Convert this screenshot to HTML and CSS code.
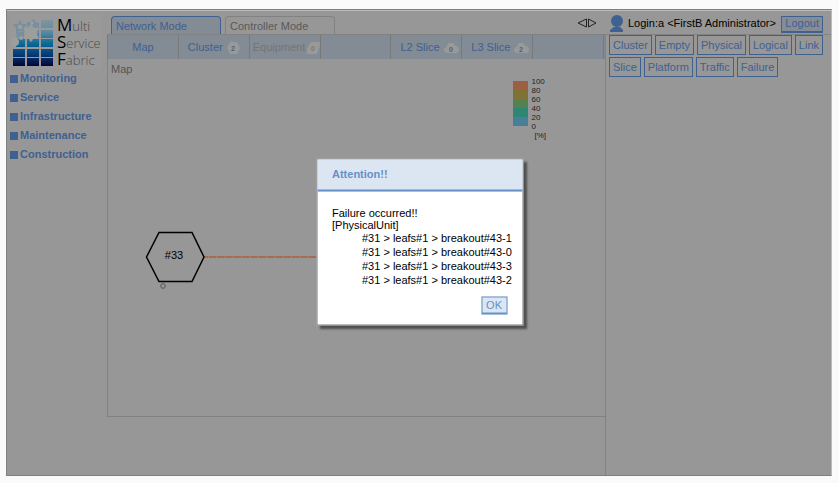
FILE: index.html
```html
<!DOCTYPE html>
<html lang="en">
<head>
<meta charset="utf-8">
<title>Multi Service Fabric</title>
<link rel="stylesheet" href="styles.css">
</head>
<body>
<div class="app">
  <aside class="side">
    <div class="brand">
      <svg width="44" height="56" viewBox="0 0 44 56" aria-hidden="true">
        <defs>
          <linearGradient id="sea" gradientUnits="userSpaceOnUse" x1="0" y1="7" x2="0" y2="53">
            <stop offset="0" stop-color="#84949c"/><stop offset=".25" stop-color="#5f8ba2"/>
            <stop offset=".5" stop-color="#0b6d9a"/><stop offset=".75" stop-color="#073b75"/><stop offset="1" stop-color="#03053a"/>
          </linearGradient>
        </defs>
        <path fill="url(#sea)" d="M31 7h12v8H31zM31 17h12v8H31zM31 26h12v8H31zM31 36h12v8H31zM31 45h12v8H31zM17 17h12v8H17zM17 26h12v8H17zM17 36h12v8H17zM17 45h12v8H17zM3 36h12v8H3zM3 45h12v8H3zM6 26h9v8H6z"/>
        <path fill="#7690a0" d="M3 11l5 0 2-4 2 4h5l-3 4 1 4-5-1-4 2v-5zM17 9l4 0 2-3 3 3 3 1v6H18zM6 19h8v7H7z"/>
        <circle cx="21" cy="20" r="6.500" fill="#9d9d9d"/>
        <path stroke="#9d9d9d" stroke-width="3" stroke-linecap="round" d="M21 13v14M15 16l12 8M15 24l12-8"/>
        <circle cx="10" cy="14" r="2.300" fill="#9d9d9d"/><circle cx="22" cy="10" r="1.800" fill="#9d9d9d"/><circle cx="11" cy="25" r="2" fill="#9d9d9d"/><circle cx="5" cy="29" r="4" fill="#9d9d9d"/>
      </svg>
      <div class="name">
        <div><b>M</b>ulti</div>
        <div><b>S</b>ervice</div>
        <div><b>F</b>abric</div>
      </div>
    </div>
    <nav class="menu">
      <a href="#">Monitoring</a>
      <a href="#">Service</a>
      <a href="#">Infrastructure</a>
      <a href="#">Maintenance</a>
      <a href="#">Construction</a>
    </nav>
  </aside>

  <div class="work">
    <header class="top">
      <div class="modes">
        <button class="mode active">Network Mode</button>
        <button class="mode">Controller Mode</button>
      </div>
      <button class="resize" aria-label="Resize panels">
        <svg width="20" height="10" viewBox="0 0 20 10"><path d="M9.500 1v8L1 5zM11.500 1v8L19 5z" fill="none" stroke="#222"/></svg>
      </button>
      <div class="user">
        <svg width="14" height="17" viewBox="0 0 14 17"><circle cx="7" cy="6" r="6" fill="#3e6191"/><path d="M0 17v-2l4-3h6l3 3v2z" fill="#3e6191"/></svg>
        <span>Login:a &lt;FirstB Administrator&gt;</span>
        <button class="logout">Logout</button>
      </div>
    </header>
    <div class="columns">
      <main class="main">
        <nav class="tabs">
          <a href="#" class="plain">Map</a>
          <a href="#">Cluster <svg width="13" height="12" viewBox="0 0 13 12"><path d="M3 0h7l3 6-3 6H3L0 6z"/><text x="6" y="9">2</text></svg></a>
          <a href="#" class="off">Equipment <svg width="13" height="12" viewBox="0 0 13 12"><path d="M4 0h9v3l-3 9H0V6z"/><text x="6" y="9">0</text></svg></a>
          <span></span>
          <a href="#">L2 Slice <svg width="15" height="11" viewBox="0 0 15 11"><path d="M3 10a3 3 0 0 1 0-6 4 4 0 0 1 8-1 3.500 3.500 0 0 1 1 7z"/><text x="7" y="9">0</text></svg></a>
          <a href="#">L3 Slice <svg width="15" height="11" viewBox="0 0 15 11"><path d="M3 10a3 3 0 0 1 0-6 4 4 0 0 1 8-1 3.500 3.500 0 0 1 1 7z"/><text x="7" y="9">2</text></svg></a>
          <span></span>
        </nav>
        <section class="map">
          <h1>Map</h1>
          <div class="legend">
            <div class="scale"><i class="l5"></i><i class="l4"></i><i class="l3"></i><i class="l2"></i><i class="l1"></i></div>
            <div class="marks"><span>100</span><span>80</span><span>60</span><span>40</span><span>20</span><span>0</span><span class="unit">[%]</span></div>
          </div>
          <svg class="topology" width="300" height="70" viewBox="0 0 300 70">
            <path d="M61 34H300" stroke="#a66c50" stroke-width="2"/>
            <path d="M61 34H300" stroke="#a08578" stroke-width="2" stroke-dasharray="1 7.300" stroke-dashoffset="-4"/>
            <path d="M3.500 34L16 9.500h33L61 34 49 58.500H16z" fill="none" stroke="#000" stroke-width="1.500"/>
            <text x="31" y="36">#33</text>
            <circle cx="20" cy="63" r="2.300" fill="none" stroke="#555"/>
          </svg>
        </section>
      </main>
      <aside class="filters">
        <button>Cluster</button><button>Empty</button><button>Physical</button><button>Logical</button><button>Link</button>
        <button>Slice</button><button>Platform</button><button>Traffic</button><button>Failure</button>
      </aside>
    </div>
  </div>
</div>

<div class="dialog" role="alertdialog" aria-labelledby="dialog-title">
  <h2 id="dialog-title">Attention!!</h2>
  <div class="message">
    <p>Failure occurred!!</p>
    <p>[PhysicalUnit]</p>
    <ul>
      <li>#31 &gt; leafs#1 &gt; breakout#43-1</li>
      <li>#31 &gt; leafs#1 &gt; breakout#43-0</li>
      <li>#31 &gt; leafs#1 &gt; breakout#43-3</li>
      <li>#31 &gt; leafs#1 &gt; breakout#43-2</li>
    </ul>
    <button class="ok">OK</button>
  </div>
</div>
</body>
</html>
```
FILE: styles.css
```css
* { box-sizing: border-box; }
body {
  margin: 0;
  padding: 9px 7px 7px 6px;
  height: 100vh;
  background: #fafafa;
  color: #000;
  font: 11px/13px "Liberation Sans", Arial, sans-serif;
}
button { font: inherit; color: inherit; background: none; border: 0; padding: 0; }
a { color: inherit; text-decoration: none; }
h1, h2, p, ul { margin: 0; padding: 0; font-size: 11px; }
ul { list-style: none; }

.app {
  display: flex;
  height: 100%;
  background: #979797;
  border: 1px solid #807f80;
  border-right-color: #bbb;
  box-shadow: inset 0 1px #bbb;
}
.side { flex: 0 0 100px; }
.brand { display: flex; gap: 3px; width: 92px; margin: 3px 0 0 3px; background: #999; }
.name { padding-top: 3px; font: 13px/17px "Open Sans", sans-serif; font-weight: 300; color: #4a4a4a; }
.name div { display: flex; align-items: baseline; height: 17px; }
.name b { color: #000; font-size: 17px; font-weight: 400; }
.menu { display: flex; flex-direction: column; gap: 6px; padding: 3px 0 0 3px; }
.menu a { display: flex; align-items: center; gap: 2px; color: #3e6191; font-weight: bold; }
.menu a::before { content: ""; width: 8px; height: 8px; background: #3e6191; }

.work { flex: 1; display: flex; flex-direction: column; min-width: 0; }
.top { display: flex; height: 25px; border-bottom: 1px solid #828282; }
.modes { display: flex; align-items: flex-end; gap: 4px; padding-left: 4px; flex: 1; }
.mode {
  width: 110px;
  height: 18px;
  padding: 1px 4px 0;
  border: 1px solid #828282;
  border-bottom: 0;
  border-radius: 4px 4px 0 0;
  text-align: left;
  color: #5a5a5a;
}
.mode.active { background: #838b95; border-color: #3e6191; color: #3e6191; }
.resize { width: 20px; margin-right: 13px; padding-top: 4px; }
.user { display: flex; align-items: center; gap: 4px; flex: 0 0 221px; padding-top: 3px; white-space: nowrap; }
.logout {
  margin: 1px 8px 0 auto;
  height: 17px;
  padding: 0 3px;
  border: 1px solid #3e6191;
  border-bottom-width: 2px;
  background: #858c95;
  color: #3e6191;
}

.columns { flex: 1; display: flex; min-height: 0; }
.main { flex: 1; display: flex; flex-direction: column; }
.tabs { display: grid; grid-template-columns: repeat(7, 1fr) 1px; height: 24px; background: #838b95; border-left: 1px solid #797979; }
.tabs > * {
  display: flex;
  align-items: center;
  gap: 4px;
  padding-left: 9px;
  border-right: 1px solid #797979;
  color: #3e6191;
  white-space: nowrap;
  overflow: hidden;
}
.tabs .plain { justify-content: center; padding: 0; }
.tabs .off { gap: 2px; padding-left: 3px; color: #757575; }
.tabs svg { flex: none; fill: #999; margin-top: 2px; }
.tabs text { font: bold 7px "Liberation Sans", sans-serif; fill: #4e6180; text-anchor: middle; }
.tabs .off text { fill: #8a7668; }

.map {
  position: relative;
  height: 358px;
  border-left: 1px solid #828282;
  border-bottom: 1px solid #828282;
}
.map h1 { padding: 4px 3px; font-weight: 400; color: #555; }
.legend { position: absolute; top: 18px; right: 59px; display: flex; gap: 3px; }
.scale { padding-top: 4px; }
.scale i { display: block; width: 15px; height: 9px; }
.l5 { background: #9c5f42; }
.l4 { background: #7f7234; }
.l3 { background: #558050; }
.l2 { background: #308674; }
.l1 { background: #487f98; }
.marks { font-size: 8px; line-height: 9px; color: #222; }
.marks span { display: block; }
.marks .unit { padding-left: 3px; }
.topology { position: absolute; left: 35px; top: 164px; }
.topology text { font: 11px "Liberation Sans", sans-serif; text-anchor: middle; }

.filters {
  flex: 0 0 226px;
  display: flex;
  flex-wrap: wrap;
  align-content: flex-start;
  gap: 2px 3px;
  padding: 0 4px 0 3px;
  border-left: 1px solid #828282;
}
.filters button { height: 20px; padding: 0 3px; border: 1px solid #3e6191; color: #3e6191; }

.dialog {
  position: absolute;
  left: 50%;
  top: 50%;
  transform: translate(-50%, -50%);
  width: 207px;
  background: #fff;
  border: 1px solid #777;
  box-shadow: 3px 3px 2px #505050;
}
.dialog h2 { padding: 8px 15px; height: 32px; background: #dce6f2; border-bottom: 2px solid #6690c8; color: #6690c8; }
.message { display: flex; flex-direction: column; padding: 15px 15px 10px 15px; }
.message p { line-height: 12px; }
.message ul { padding-left: 30px; white-space: nowrap; line-height: 14px; }
.ok {
  align-self: flex-end;
  height: 18px;
  margin-top: 10px;
  padding: 0 4px;
  background: #dce6f2;
  border: 1px solid #6690c8;
  border-bottom-width: 2px;
  color: #6690c8;
}
```
